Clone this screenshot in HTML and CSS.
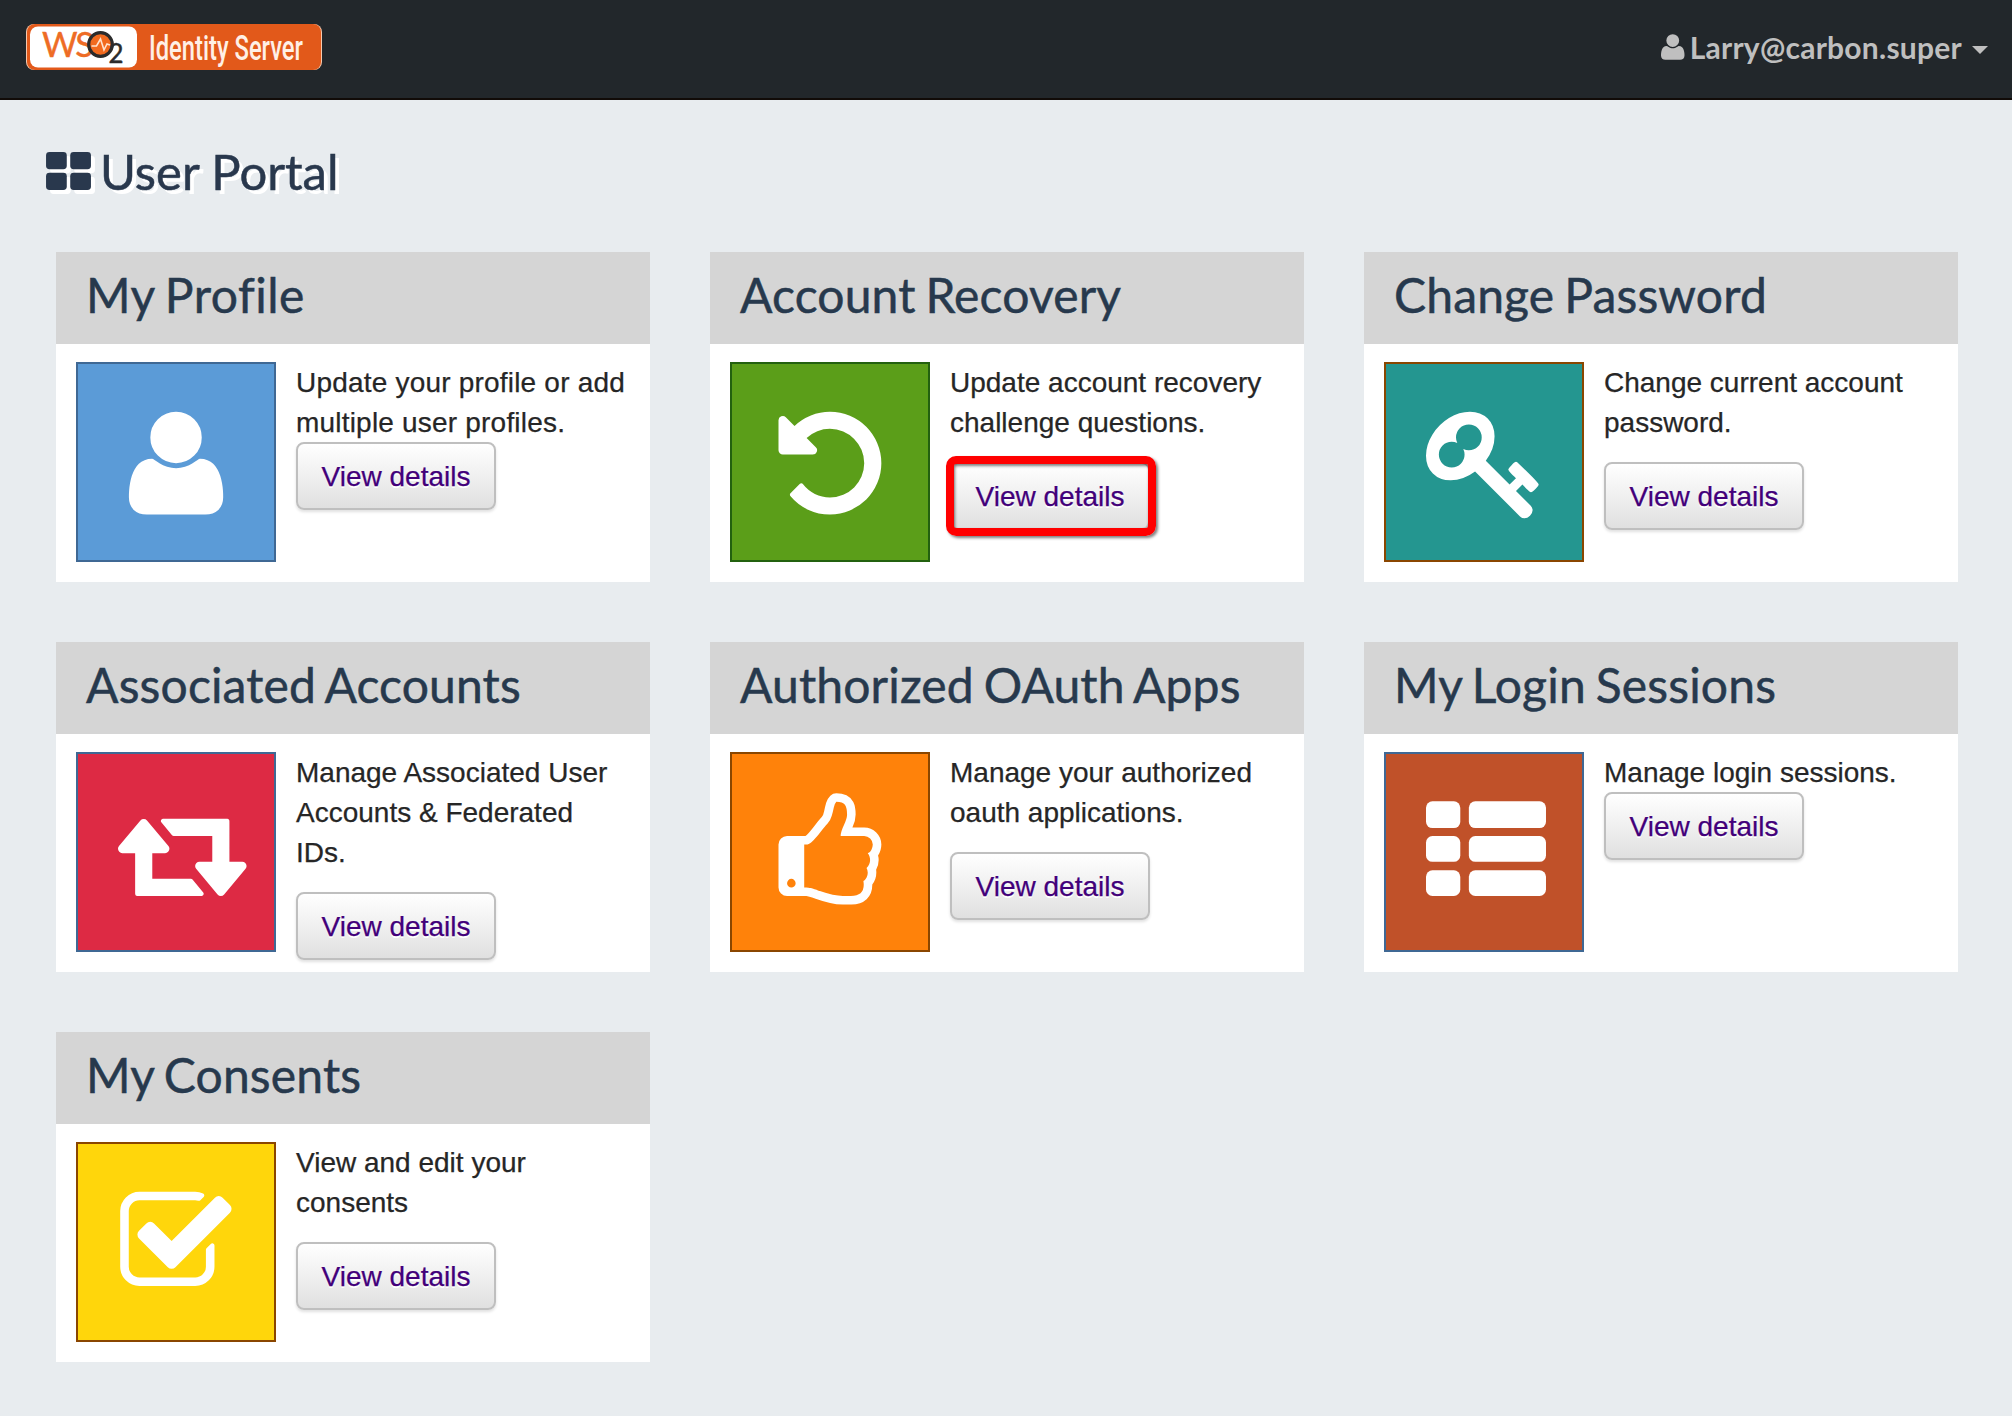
FILE: index.html
```html
<!DOCTYPE html>
<html lang="en">
<head>
<meta charset="utf-8">
<title>User Portal</title>
<link rel="stylesheet" href="styles.css">
</head>
<body>
<header class="topbar">
  <svg class="logo" viewBox="0 0 296 46" role="img" aria-label="WSO2 Identity Server">
    <rect x="0" y="0" width="296" height="46" rx="8" fill="#f6c9ae"/>
    <rect x="1" y="0" width="294" height="46" rx="8" fill="#e2591a"/>
    <rect x="4" y="2.500" width="107" height="41" rx="8" fill="#fff"/>
    <text class="logo-ws" x="16" y="32.500" textLength="50" lengthAdjust="spacingAndGlyphs">WS</text>
    <circle cx="74.500" cy="20.500" r="11.800" fill="#f26a1e" stroke="#2b2b2b" stroke-width="3.200"/>
    <path d="M65.500 22h5l4-7 3.500 11 3-6 3 1" fill="none" stroke="#ffe3cf" stroke-width="1.600"/>
    <text class="logo-two" x="82.500" y="39" textLength="15" lengthAdjust="spacingAndGlyphs">2</text>
    <text class="logo-name" x="123" y="35.500" textLength="154" lengthAdjust="spacingAndGlyphs">Identity Server</text>
  </svg>
  <div class="account">
    <svg class="account-icon" viewBox="0 0 1408 1536"><path transform="translate(0 1408) scale(1 -1)" d="M1408 131q0-120-73-189.500t-194-69.500h-874q-121 0-194 69.500t-73 189.500q0 53 3.500 103.500t14 109t26.500 108.500t43 97.500t62 81t85.500 53.500t111.500 20q9 0 42-21.500t74.500-48t108-48t133.500-21.500t133.500 21.500t108 48t74.500 48t42 21.500q61 0 111.500-20t85.500-53.500t62-81t43-97.500t26.500-108.500t14-109t3.500-103.500zM1088 1024q0-159-112.500-271.500t-271.500-112.500t-271.500 112.500t-112.500 271.500t112.500 271.500t271.500 112.500t271.500-112.500t112.500-271.500z"/></svg>
    <span class="account-name">Larry@carbon.super</span>
    <span class="caret"></span>
  </div>
</header>
<main class="page">
  <h1 class="page-title">
    <svg class="title-icon" viewBox="0 0 1664 1408"><rect width="768" height="640" rx="128"/><rect x="896" width="768" height="640" rx="128"/><rect y="768" width="768" height="640" rx="128"/><rect x="896" y="768" width="768" height="640" rx="128"/></svg>
    <span>User Portal</span>
  </h1>
  <div class="cards">
    <section class="card card-profile">
      <h2 class="card-title">My Profile</h2>
      <div class="card-body">
        <div class="tile tile-blue"><svg viewBox="2 2 196 196"><path transform="translate(52.900 144) scale(.06696 -.06696)" d="M1408 131q0-120-73-189.500t-194-69.500h-874q-121 0-194 69.500t-73 189.500q0 53 3.500 103.500t14 109t26.500 108.500t43 97.500t62 81t85.500 53.500t111.500 20q9 0 42-21.500t74.500-48t108-48t133.500-21.500t133.500 21.500t108 48t74.500 48t42 21.500q61 0 111.500-20t85.500-53.500t62-81t43-97.500t26.500-108.500t14-109t3.500-103.500zM1088 1024q0-159-112.500-271.500t-271.500-112.500t-271.500 112.500t-112.500 271.500t112.500 271.500t271.500 112.500t271.500-112.500t112.500-271.500z"/></svg></div>
        <div class="card-text"><p>Update your profile or add multiple user profiles.</p><a class="btn" href="#">View details</a></div>
      </div>
    </section>
    <section class="card">
      <h2 class="card-title">Account Recovery</h2>
      <div class="card-body">
        <div class="tile tile-green"><svg viewBox="2 2 196 196"><path transform="translate(48.500 144) scale(.06696 -.06696)" d="M1536 640q0-156-61-298t-164-245t-245-164t-298-61q-172 0-327 72.500t-264 204.500q-7 10-6.500 22.500t8.500 20.500l137 138q10 9 25 9q16-2 23-12q73-95 179-147t225-52q104 0 198.500 40.500t163.500 109.500t109.500 163.500t40.500 198.500t-40.500 198.500t-109.500 163.500t-163.500 109.500t-198.500 40.500q-98 0-188-35.500t-160-101.500l137-138q31-30 14-69q-17-40-59-40h-448q-26 0-45 19t-19 45v448q0 42 40 59q39 17 69-14l130-129q107 101 244.500 156.500t284.500 55.500q156 0 298-61t245-164t164-245t61-298z"/></svg></div>
        <div class="card-text spaced"><p>Update account recovery challenge questions.</p><a class="btn highlighted" href="#">View details</a></div>
      </div>
    </section>
    <section class="card">
      <h2 class="card-title">Change Password</h2>
      <div class="card-body">
        <div class="tile tile-teal"><svg viewBox="2 2 196 196"><path transform="translate(42 144) scale(.06696 -.06696)" d="M832 1024q0 80-56 136t-136 56t-136-56t-56-136q0-42 19-83q-41 19-83 19q-80 0-136-56t-56-136t56-136t136-56t136 56t56 136q0 42-19 83q41-19 83-19q80 0 136 56t56 136zM1683 320q0-17-49-66t-66-49q-9 0-28.500 16t-36.500 33t-38.500 40t-24.500 26l-96-96l220-220q28-28 28-68q0-42-39-81t-81-39q-40 0-68 28l-671 671q-176-131-365-131q-163 0-265.500 102.500t-102.500 265.500q0 160 95 313t248 248t313 95q163 0 265.500-102.500t102.500-265.500q0-189-131-365l355-355l96 96q-3 3-26 24.500t-40 38.500t-33 36.500t-16 28.500q0 17 49 66t66 49q13 0 23-10q6-6 46-44.500t82-79.500t86.500-86t73-78t28.500-41z"/></svg></div>
        <div class="card-text spaced"><p>Change current account password.</p><a class="btn" href="#">View details</a></div>
      </div>
    </section>
    <section class="card">
      <h2 class="card-title">Associated Accounts</h2>
      <div class="card-body">
        <div class="tile tile-red"><svg viewBox="2 2 196 196"><path transform="translate(42 144) scale(.06696 -.06696)" d="M1280 32q0-13-9.500-22.500t-22.500-9.500h-960q-8 0-13.500 2t-9 7t-5.500 8t-3 11.500t-1 11.500v13v11v160v416h-192q-26 0-45 19t-19 45q0 24 15 41l320 384q19 22 49 22t49-22l320-384q15-17 15-41q0-26-19-45t-45-19h-192v-384h576q16 0 25-11l160-192q7-10 7-21zM1920 448q0-24-15-41l-320-384q-20-23-49-23t-49 23l-320 384q-15 17-15 41q0 26 19 45t45 19h192v384h-576q-16 0-25 12l-160 192q-7 9-7 20q0 13 9.500 22.500t22.500 9.500h960q8 0 13.500-2t9-7t5.500-8t3-11.500t1-11.500v-13v-11v-160v-416h192q26 0 45-19t19-45z"/></svg></div>
        <div class="card-text spaced"><p>Manage Associated User Accounts &amp; Federated IDs.</p><a class="btn" href="#">View details</a></div>
      </div>
    </section>
    <section class="card">
      <h2 class="card-title">Authorized OAuth Apps</h2>
      <div class="card-body">
        <div class="tile tile-orange"><svg viewBox="2 2 196 196"><path transform="translate(48.500 144) scale(.06696 -.06696)" d="M256 192q0 26-19 45t-45 19t-45-19t-19-45t19-45t45-19t45 19t19 45zM1408 768q0 51-39 89.500t-89 38.500h-352q0 58 48 159.500t48 160.500q0 98-32 145t-128 47q-26-26-38-85t-30.500-125.500t-59.500-109.500q-22-23-77-91q-4-5-23-30t-31.500-41t-34.500-42.500t-40-44t-38.500-35.500t-40-27t-35.500-9h-32v-640h32q13 0 31.500-3t33-6.500t38-11t35-11.500t35.500-12.500t29-10.500q211-73 342-73h121q192 0 192 167q0 26-5 56q30 16 47.500 52.500t17.500 73.500t-18 69q53 50 53 119q0 25-10 55.500t-25 47.500q32 1 53.500 47t21.500 81zM1536 769q0-89-49-163q9-33 9-69q0-77-38-144q3-21 3-43q0-101-60-178q1-139-85-219.500t-227-80.500h-36h-93q-96 0-189.500 22.500t-216.500 65.500q-116 40-138 40h-288q-53 0-90.500 37.500t-37.500 90.500v640q0 53 37.500 90.500t90.500 37.500h274q36 24 137 155q58 75 107 128q24 25 35.500 85.500t30.500 126.500t62 108q39 37 90 37q84 0 151-32.500t102-101.500t35-186q0-93-48-192h176q104 0 180-76t76-179z"/></svg></div>
        <div class="card-text spaced"><p>Manage your authorized oauth applications.</p><a class="btn" href="#">View details</a></div>
      </div>
    </section>
    <section class="card">
      <h2 class="card-title">My Login Sessions</h2>
      <div class="card-body">
        <div class="tile tile-brown"><svg viewBox="2 2 196 196"><g transform="translate(42 49.300) scale(.06696)"><rect width="512" height="400" rx="96"/><rect x="640" width="1152" height="400" rx="96"/><rect y="520" width="512" height="384" rx="96"/><rect x="640" y="520" width="1152" height="384" rx="96"/><rect y="1030" width="512" height="384" rx="96"/><rect x="640" y="1030" width="1152" height="384" rx="96"/></g></svg></div>
        <div class="card-text"><p>Manage login sessions.</p><a class="btn" href="#">View details</a></div>
      </div>
    </section>
    <section class="card">
      <h2 class="card-title">My Consents</h2>
      <div class="card-body">
        <div class="tile tile-yellow"><svg viewBox="2 2 196 196"><path transform="translate(44.200 144) scale(.06696 -.06696)" d="M1408 606v-318q0-119-84.500-203.500t-203.500-84.500h-832q-119 0-203.500 84.500t-84.500 203.500v832q0 119 84.500 203.500t203.500 84.500h832q63 0 117-25q15-7 18-23q3-17-9-29l-49-49q-10-10-23-10q-3 0-9 2q-23 6-45 6h-832q-66 0-113-47t-47-113v-832q0-66 47-113t113-47h832q66 0 113 47t47 113v254q0 13 9 22l64 64q10 10 23 10q6 0 12-3q20-8 20-29zM1639 1095l-814-814q-24-24-57-24t-57 24l-430 430q-24 24-24 57t24 57l110 110q24 24 57 24t57-24l263-263l647 647q24 24 57 24t57-24l110-110q24-24 24-57t-24-57z"/></svg></div>
        <div class="card-text spaced"><p>View and edit your consents</p><a class="btn" href="#">View details</a></div>
      </div>
    </section>
  </div>
</main>
</body>
</html>
```
FILE: styles.css
```css
* {
  box-sizing: border-box;
}

body {
  margin: 0;
  min-height: 1416px;
  background: #e8ecef;
  color: #262626;
  font-family: "Liberation Sans", Arial, sans-serif;
  font-size: 28px;
  line-height: 40px;
  font-variant-ligatures: none;
}

svg {
  display: block;
}

.topbar {
  display: flex;
  justify-content: space-between;
  align-items: flex-start;
  height: 100px;
  padding: 24px 24px 0 26px;
  background: #22272b;
  border-bottom: 2px solid #110b08;
}

.logo {
  width: 296px;
  height: 46px;
  overflow: visible;
}

.logo-ws {
  font: 400 34px Lato, sans-serif;
  letter-spacing: -2px;
  fill: #ee6c25;
  stroke: #ee6c25;
  stroke-width: .4px;
}

.logo-two {
  font: 400 27px Lato, sans-serif;
  fill: #2b2b2b;
  stroke: #2b2b2b;
  stroke-width: .5px;
}

.logo-name {
  font: 500 35px Roboto, sans-serif;
  fill: #fff0e6;
}

.account {
  display: flex;
  align-items: center;
  height: 46px;
  color: #bfbfbf;
}

.account-icon {
  width: 23.5px;
  height: 26px;
  margin-right: 5px;
  fill: currentColor;
}

.account-name {
  font: 700 30px/46px Lato, sans-serif;
  font-variant-ligatures: none;
  letter-spacing: .25px;
}

.caret {
  margin: 6px 0 0 10px;
  border: 8px solid transparent;
  border-top-color: currentColor;
  border-bottom: 0;
}

.page {
  padding: 33px 54px 0 56px;
}

.page-title {
  display: flex;
  align-items: center;
  gap: 9px;
  height: 76px;
  margin: 0 0 43px -10px;
  color: #29384d;
  font: 400 49px/76px Lato, sans-serif;
  text-shadow: 4px 4px 0 #fff;
  -webkit-text-stroke: .5px #29384d;
}

.title-icon {
  width: 45px;
  height: 38px;
  fill: currentColor;
  overflow: visible;
  filter: drop-shadow(4px 4px 0 #fff);
}

.cards {
  display: grid;
  grid-template-columns: repeat(3, 594px);
  grid-auto-rows: 330px;
  gap: 60px;
}

.card {
  background: #fff;
}

.card-title {
  height: 92px;
  margin: 0;
  padding: 14px 30px 0;
  background: #d5d5d5;
  color: #27394d;
  font: 400 48px/58px Lato, sans-serif;
  font-variant-ligatures: none;
  letter-spacing: .15px;
  word-spacing: -2.5px;
  -webkit-text-stroke: .5px #27394d;
}

.card-profile .card-title {
  letter-spacing: .5px;
}

.card-body {
  display: flex;
  gap: 20px;
  padding: 18px 20px 0;
}

.tile {
  flex: none;
  width: 200px;
  height: 200px;
  border: 2px solid #3f6894;
  fill: #fff;
}

.tile-blue { background: #5b9bd7; }
.tile-green { background: #5b9e19; border-color: #23610f; }
.tile-teal { background: #249690; border-color: #8a4600; }
.tile-red { background: #dd2a44; }
.tile-orange { background: #ff820a; border-color: #8a4600; }
.tile-brown { background: #c05129; }
.tile-yellow { background: #ffd60b; border-color: #8a4600; }

.card-text {
  display: flex;
  flex-direction: column;
  align-items: flex-start;
  width: 334px;
}

.card-text p {
  margin: 0;
  padding-top: 1px;
  margin-bottom: -1px;
  -webkit-text-stroke: .25px #262626;
}

.card-profile p {
  letter-spacing: .2px;
}

.spaced {
  gap: 20px;
}

.btn {
  position: relative;
  width: 200px;
  height: 68px;
  padding-top: 1px;
  border: 2px solid #bfbfbf;
  border-radius: 8px;
  background: linear-gradient(#fff, #e0e0e0);
  box-shadow: 0 2px 3px rgba(0, 0, 0, .12);
  color: #42007a;
  line-height: 64px;
  text-align: center;
  text-decoration: none;
  text-shadow: 0 2px 0 #fff;
  -webkit-text-stroke: .25px #42007a;
}

.highlighted::after {
  content: "";
  position: absolute;
  inset: -8px -8px -8px -6px;
  border: 8px solid #f00;
  border-radius: 10px;
  box-shadow: 2px 2px 3px rgba(0, 0, 0, .5), inset 1px 2px 3px rgba(0, 0, 0, .5);
}
```
